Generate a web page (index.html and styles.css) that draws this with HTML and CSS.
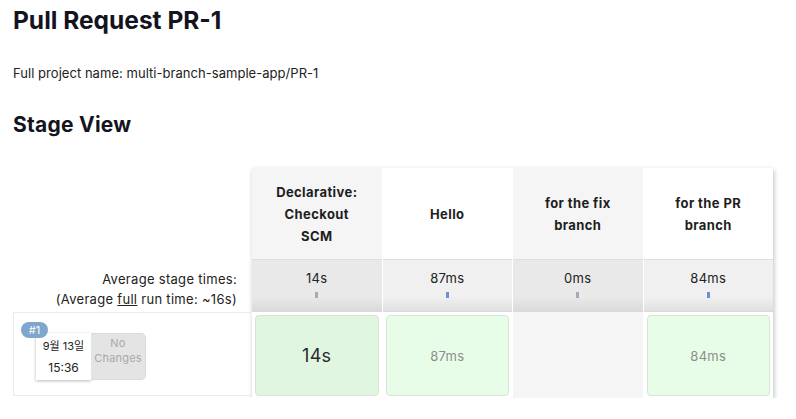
FILE: index.html
```html
<!DOCTYPE html>
<html lang="ko">
<head>
<meta charset="utf-8">
<title>Pull Request PR-1</title>
<link rel="stylesheet" href="styles.css">
</head>
<body>
<div class="page">
  <h1 class="title">Pull Request PR-1</h1>
  <p class="project">Full project name: multi-branch-sample-app/PR-1</p>
  <h2 class="section">Stage View</h2>

  <div class="stage-view">
    <div class="labels">
      <div class="label-spacer"></div>
      <div class="avg-labels">
        <div>Average stage times:</div>
        <div>(Average <u>full</u> run time: ~16s)</div>
      </div>
      <div class="run-info">
        <span class="badge">#1</span>
        <div class="run-meta">
          <div class="run-date">
            <div class="date">9월 13일</div>
            <div class="time">15:36</div>
          </div>
          <div class="changes">No<br>Changes</div>
        </div>
      </div>
    </div>

    <div class="stage-table">
      <div class="head alt">Declarative:<br>Checkout<br>SCM</div>
      <div class="head">Hello</div>
      <div class="head alt">for the fix<br>branch</div>
      <div class="head">for the PR<br>branch</div>

      <div class="avg alt"><span>14s</span><i class="bar dim"></i></div>
      <div class="avg"><span>87ms</span><i class="bar"></i></div>
      <div class="avg alt"><span>0ms</span><i class="bar dim"></i></div>
      <div class="avg"><span>84ms</span><i class="bar"></i></div>

      <div class="cell"><div class="box box-main">14s</div></div>
      <div class="cell"><div class="box">87ms</div></div>
      <div class="cell empty"></div>
      <div class="cell"><div class="box">84ms</div></div>
    </div>
  </div>
</div>
</body>
</html>
```

FILE: styles.css
```css
* { box-sizing: border-box; }
body {
  margin: 0;
  background: #fff;
  color: #14141f;
  font-family: Inter, "Noto Sans CJK KR", "Liberation Sans", sans-serif;
}
.page { padding: 6px 13px 0; }
.title {
  margin: 0;
  font-size: 24.5px;
  line-height: 28px;
  font-weight: 700;
}
.project {
  margin: 30px 0 0;
  font-size: 13px;
  line-height: 18px;
  letter-spacing: 0.04px;
  color: #222;
}
.section {
  margin: 31px 0 0;
  font-size: 21px;
  line-height: 24px;
  font-weight: 700;
  letter-spacing: 0.25px;
}
.stage-view {
  margin-top: 31px;
  display: flex;
  align-items: flex-start;
}
.labels {
  width: 239px;
  display: flex;
  flex-direction: column;
}
.label-spacer { height: 93px; }
.avg-labels {
  height: 51px;
  padding: 8px 15px 0 0;
  text-align: right;
  font-size: 13px;
  line-height: 20px;
  letter-spacing: 0.3px;
  color: #222;
}
.run-info {
  position: relative;
  height: 84px;
  border: 1px solid #ebebeb;
  border-right: none;
  padding: 20px 0 0 22px;
}
.badge {
  position: absolute;
  left: 7px;
  top: 9px;
  width: 27px;
  height: 16px;
  border-radius: 8px;
  background: #7fa6cb;
  color: #fff;
  font-size: 11px;
  line-height: 16px;
  text-align: center;
  z-index: 2;
}
.run-meta { display: flex; }
.run-date {
  width: 55px;
  height: 47px;
  background: #fff;
  box-shadow: 0 1px 3px rgba(0,0,0,0.28);
  text-align: center;
  color: #222;
  padding-top: 5px;
}
.date { font-size: 11px; line-height: 16px; }
.time { font-size: 12px; line-height: 16px; margin-top: 6px; }
.changes {
  width: 55px;
  height: 47px;
  background: #e4e4e4;
  border: 1px solid #dadada;
  border-left: none;
  border-radius: 0 5px 5px 0;
  color: #a9a9a9;
  font-size: 11px;
  line-height: 15px;
  letter-spacing: 0.2px;
  text-align: center;
  padding-top: 2px;
}
.stage-table {
  width: 521px;
  display: grid;
  grid-template-columns: repeat(4, 1fr);
  grid-template-rows: 92px 52px 86px;
  column-gap: 1px;
  background: #fff;
  box-shadow: 1px 2px 5px rgba(0,0,0,0.25);
}
.head {
  display: flex;
  align-items: center;
  justify-content: center;
  text-align: center;
  font-size: 13px;
  line-height: 22px;
  font-weight: 700;
  letter-spacing: 0.4px;
  color: #1e1e1e;
  background: #fff;
  border-bottom: 1px solid #dedede;
}
.head.alt { background: #f5f5f5; }
.avg {
  display: flex;
  flex-direction: column;
  align-items: center;
  padding-top: 8px;
  font-size: 13px;
  line-height: 20px;
  letter-spacing: 0.3px;
  color: #222;
  background: linear-gradient(to bottom, #f0f0f0 72%, #e0e0e0 100%);
  border-bottom: 1px solid #d9d9d9;
}
.avg.alt { background: linear-gradient(to bottom, #e9e9e9 72%, #dadada 100%); }
.bar {
  display: block;
  width: 3px;
  height: 6px;
  margin-top: 4px;
  background: #6a93cf;
}
.bar.dim { background: #a3abb7; }
.cell {
  padding: 3px 3px 2px;
  background: #fff;
}
.cell.empty { background: #f5f5f5; }
.box {
  height: 100%;
  display: flex;
  align-items: center;
  justify-content: center;
  background: #e8fde8;
  border: 1px solid #d5e6d5;
  border-radius: 4px;
  color: #8a8f8a;
  font-size: 13px;
  letter-spacing: 0.3px;
}
.box-main {
  background: #e1f6e1;
  color: #2a2a2a;
  font-size: 18px;
}
```
